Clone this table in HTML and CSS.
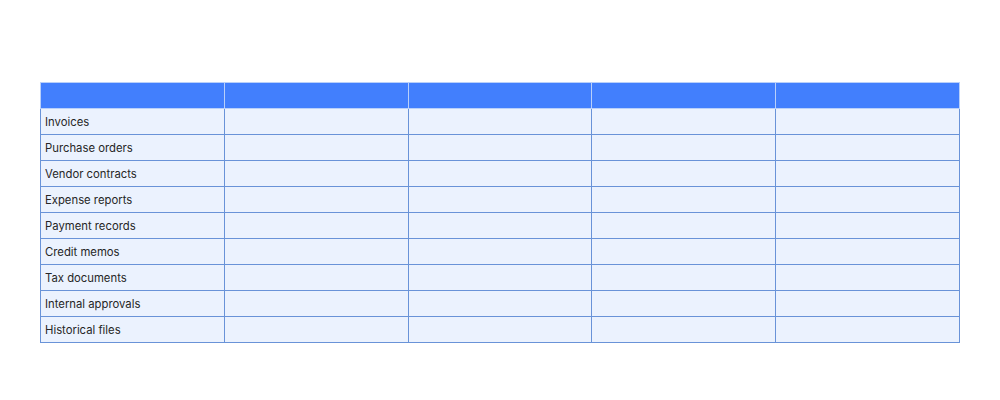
FILE: index.html
```html
<!DOCTYPE html>
<html>
<head>
<meta charset="utf-8">
<link rel="stylesheet" href="styles.css">
</head>
<body>
<div class="page">
<table class="grid">
<thead>
<tr><th></th><th></th><th></th><th></th><th></th></tr>
</thead>
<tbody>
<tr><td>Invoices</td><td></td><td></td><td></td><td></td></tr>
<tr><td>Purchase orders</td><td></td><td></td><td></td><td></td></tr>
<tr><td>Vendor contracts</td><td></td><td></td><td></td><td></td></tr>
<tr><td>Expense reports</td><td></td><td></td><td></td><td></td></tr>
<tr><td>Payment records</td><td></td><td></td><td></td><td></td></tr>
<tr><td>Credit memos</td><td></td><td></td><td></td><td></td></tr>
<tr><td>Tax documents</td><td></td><td></td><td></td><td></td></tr>
<tr><td>Internal approvals</td><td></td><td></td><td></td><td></td></tr>
<tr><td>Historical files</td><td></td><td></td><td></td><td></td></tr>
</tbody>
</table>
</div>
</body>
</html>
```
FILE: styles.css
```css
html, body {
  margin: 0;
  padding: 0;
  background: #ffffff;
}
.page {
  padding: 82px 40px 0 40px;
  font-family: Inter, "Liberation Sans", sans-serif;
}
.grid {
  border-collapse: collapse;
  width: 920px;
  table-layout: fixed;
}
.grid th {
  height: 25px;
  padding: 0;
  background: #427ffd;
  border: 1px solid #b9d0fa;
}
.grid td {
  height: 25px;
  padding: 0 4px;
  line-height: 14px;
  background: #ebf2fe;
  border: 1px solid #6993d8;
  font-size: 11.3px;
  color: #262626;
  text-align: left;
  vertical-align: middle;
}
```
